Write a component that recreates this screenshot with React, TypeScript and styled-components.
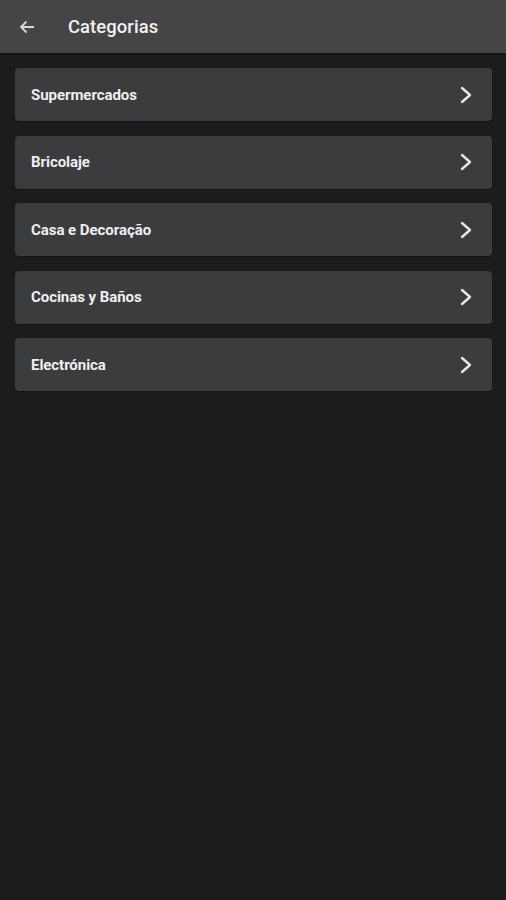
import React from "react";
import styled, { createGlobalStyle } from "styled-components";

const Global = createGlobalStyle`
  html, body { margin: 0; padding: 0; background: #1b1c1e; }
  body { font-family: Roboto, "Noto Sans", sans-serif; }
`;

const Page = styled.div`
  width: 506px;
  height: 900px;
  background: #1b1c1e;
  display: flex;
  flex-direction: column;
`;

const Toolbar = styled.header`
  height: 53px;
  background: #454547;
  display: flex;
  align-items: center;
  box-shadow: 0 1px 2px rgba(0, 0, 0, 0.5);
  flex-shrink: 0;
`;

const BackButton = styled.div`
  width: 54px;
  height: 53px;
  display: flex;
  align-items: center;
  justify-content: center;
`;

const Title = styled.h1`
  margin: 0 0 0 14px;
  font-size: 18.4px;
  font-weight: 500;
  color: #f2f2f2;
  letter-spacing: 0.1px;
`;

const List = styled.div`
  display: flex;
  flex-direction: column;
  gap: 14.5px;
  padding: 15px 14px 0 15px;
`;

const Card = styled.div`
  height: 53px;
  background: #3b3c3e;
  border-radius: 4px;
  display: flex;
  align-items: center;
  justify-content: space-between;
  padding: 0 18px 0 16px;
  box-shadow: 0 1px 1px rgba(0, 0, 0, 0.3);
`;

const Label = styled.span`
  font-size: 15px;
  font-weight: 700;
  color: #f0f0f0;
  letter-spacing: -0.05px;
`;

const items = [
  "Supermercados",
  "Bricolaje",
  "Casa e Decoração",
  "Cocinas y Baños",
  "Electrónica",
];

const Chevron = () => (
  <svg width="16" height="20" viewBox="0 0 16 20">
    <path d="M4 3 L12 10 L4 17" fill="none" stroke="#e6e6e6" strokeWidth="2.4" strokeLinecap="round" strokeLinejoin="round" />
  </svg>
);

export default function App() {
  return (
    <Page>
      <Global />
      <Toolbar>
        <BackButton>
          <svg width="16" height="16" viewBox="0 0 16 16">
            <path d="M15 8 H2 M7.5 2.5 L2 8 L7.5 13.5" fill="none" stroke="#d8d8d8" strokeWidth="1.8" />
          </svg>
        </BackButton>
        <Title>Categorias</Title>
      </Toolbar>
      <List>
        {items.map((t) => (
          <Card key={t}>
            <Label>{t}</Label>
            <Chevron />
          </Card>
        ))}
      </List>
    </Page>
  );
}
